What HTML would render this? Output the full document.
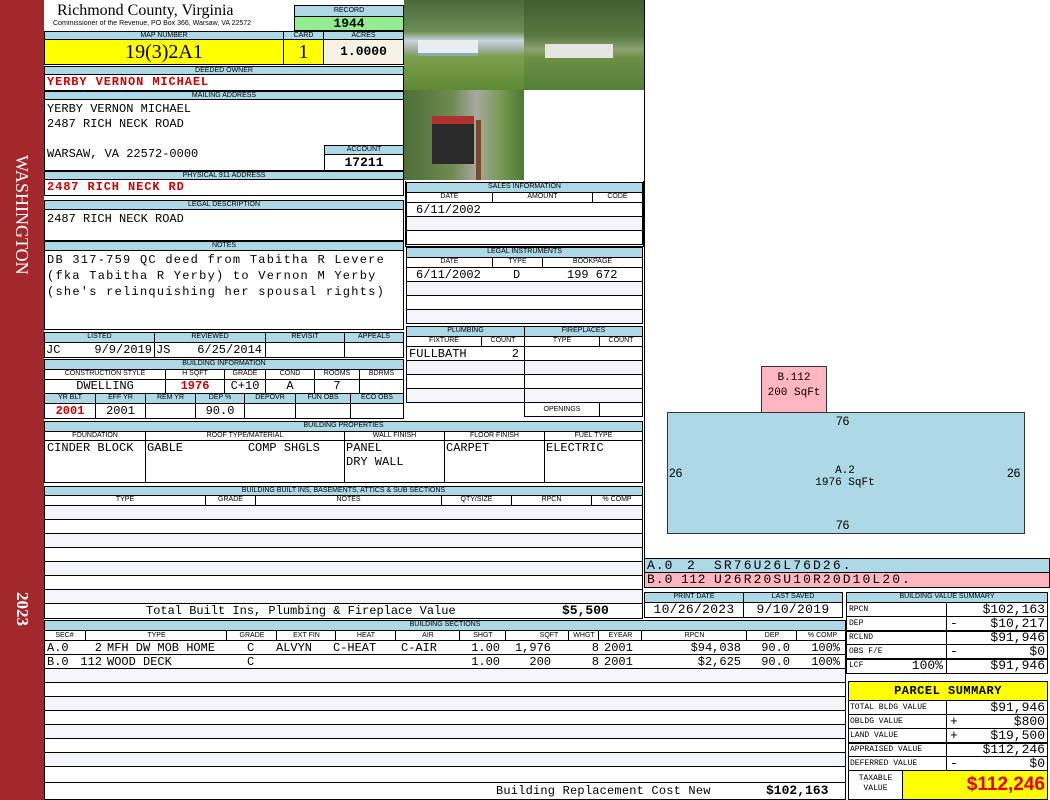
<!DOCTYPE html><html><head><meta charset="utf-8"><style>
body{margin:0;width:1050px;height:800px;position:relative;background:#fff;overflow:hidden;font-family:"Liberation Sans",sans-serif}
.a{position:absolute;box-sizing:border-box;overflow:hidden;white-space:nowrap}
.h{position:absolute;box-sizing:border-box;background:#add8e6;border:1px solid #000;font-size:7px;text-align:center;line-height:8px;overflow:hidden;white-space:nowrap}
.c{position:absolute;box-sizing:border-box;border:1px solid #000;background:#fff;overflow:hidden;white-space:pre}
.m{font-family:"Liberation Mono",monospace;font-size:12px}
.alt{background:#f3f5fb}
.rd{color:#d00000;font-weight:bold}
.s{position:absolute;top:0;white-space:pre}
.hs{position:absolute;top:0;height:9px;text-align:center;border-left:1px solid #000}
</style></head><body>
<!-- sidebar -->
<div class="a" style="left:0;top:0;width:44px;height:800px;background:#a3282b"></div>
<div class="a" style="left:8px;top:155px;width:28px;height:170px;color:#fff;font:18px 'Liberation Serif',serif;writing-mode:vertical-rl;line-height:28px">WASHINGTON</div>
<div class="a" style="left:8px;top:592px;width:28px;height:40px;color:#fff;font:bold 17px 'Liberation Serif',serif;writing-mode:vertical-rl;line-height:28px">2023</div>

<!-- header -->
<div class="a" style="left:57px;top:2px;font:16px 'Liberation Serif',serif">Richmond County, Virginia</div>
<div class="a" style="left:53px;top:20px;font:7px 'Liberation Sans'">Commissioner of the Revenue, PO Box 366, Warsaw, VA 22572</div>
<div class="h" style="left:294px;top:5px;width:110px;height:12px;line-height:10px">RECORD</div>
<div class="c m" style="left:294px;top:16px;width:110px;height:15px;background:#90ee90;text-align:center;font-weight:bold;font-size:13px;line-height:13px">1944</div>
<div class="h" style="left:44px;top:31px;width:240px;height:9px">MAP NUMBER</div>
<div class="h" style="left:283px;top:31px;width:41px;height:9px">CARD</div>
<div class="h" style="left:323px;top:31px;width:81px;height:9px">ACRES</div>
<div class="c" style="left:44px;top:39px;width:240px;height:26px;background:#ffff00;text-align:center;font:20px 'Liberation Serif',serif;line-height:24px">19(3)2A1</div>
<div class="c" style="left:283px;top:39px;width:41px;height:26px;background:#ffff00;text-align:center;font:20px 'Liberation Serif',serif;line-height:24px">1</div>
<div class="c m" style="left:323px;top:39px;width:81px;height:26px;background:#f4f3e4;text-align:center;font-weight:bold;font-size:13px;line-height:24px">1.0000</div>
<div class="h" style="left:44px;top:66px;width:360px;height:9px">DEEDED OWNER</div>
<div class="c m rd" style="left:44px;top:74px;width:360px;height:17px;line-height:15px;padding-left:2px;letter-spacing:0.9px">YERBY VERNON MICHAEL</div>
<div class="h" style="left:44px;top:91px;width:360px;height:9px">MAILING ADDRESS</div>
<div class="c m" style="left:44px;top:99px;width:360px;height:72px;padding:2px 0 0 2px;line-height:15px">YERBY VERNON MICHAEL
2487 RICH NECK ROAD

WARSAW, VA 22572-0000</div>
<div class="h" style="left:324px;top:145px;width:80px;height:10px">ACCOUNT</div>
<div class="c m" style="left:324px;top:154px;width:80px;height:17px;text-align:center;font-weight:bold;font-size:13px;line-height:15px">17211</div>
<div class="h" style="left:44px;top:171px;width:360px;height:9px">PHYSICAL 911 ADDRESS</div>
<div class="c m rd" style="left:44px;top:179px;width:360px;height:17px;line-height:15px;padding-left:2px;letter-spacing:0.9px">2487 RICH NECK RD</div>
<div class="h" style="left:44px;top:200px;width:360px;height:10px">LEGAL DESCRIPTION</div>
<div class="c m" style="left:44px;top:209px;width:360px;height:32px;padding:2px 0 0 2px">2487 RICH NECK ROAD</div>
<div class="h" style="left:44px;top:241px;width:360px;height:10px">NOTES</div>
<div class="c m" style="left:44px;top:250px;width:360px;height:80px;padding:1px 0 0 2px;line-height:16px;letter-spacing:1.25px">DB 317-759 QC deed from Tabitha R Levere
(fka Tabitha R Yerby) to Vernon M Yerby
(she's relinquishing her spousal rights)</div>

<!-- listed -->
<div class="h" style="left:44px;top:332px;width:111px;height:11px">LISTED</div>
<div class="h" style="left:154px;top:332px;width:112px;height:11px">REVIEWED</div>
<div class="h" style="left:265px;top:332px;width:80px;height:11px">REVISIT</div>
<div class="h" style="left:344px;top:332px;width:60px;height:11px">APPEALS</div>
<div class="c m" style="left:44px;top:342px;width:111px;height:16px;line-height:14px"><span class="s" style="left:1px">JC</span><span class="s" style="right:2px">9/9/2019</span></div>
<div class="c m" style="left:154px;top:342px;width:112px;height:16px;line-height:14px"><span class="s" style="left:1px">JS</span><span class="s" style="right:3px">6/25/2014</span></div>
<div class="c" style="left:265px;top:342px;width:80px;height:16px"></div>
<div class="c" style="left:344px;top:342px;width:60px;height:16px"></div>

<!-- building info -->
<div class="h" style="left:44px;top:359px;width:360px;height:11px">BUILDING INFORMATION</div>
<div class="h" style="left:44px;top:369px;width:122px;height:11px;background:#fff">CONSTRUCTION STYLE</div>
<div class="h" style="left:165px;top:369px;width:60px;height:11px;background:#fff">H SQFT</div>
<div class="h" style="left:224px;top:369px;width:42px;height:11px;background:#fff">GRADE</div>
<div class="h" style="left:265px;top:369px;width:50px;height:11px;background:#fff">COND</div>
<div class="h" style="left:314px;top:369px;width:46px;height:11px;background:#fff">ROOMS</div>
<div class="h" style="left:359px;top:369px;width:45px;height:11px;background:#fff">BDRMS</div>
<div class="c m" style="left:44px;top:379px;width:122px;height:15px;text-align:center;line-height:13px">DWELLING</div>
<div class="c m rd" style="left:165px;top:379px;width:60px;height:15px;text-align:center;line-height:13px">1976</div>
<div class="c m" style="left:224px;top:379px;width:42px;height:15px;text-align:center;line-height:13px">C+10</div>
<div class="c m" style="left:265px;top:379px;width:50px;height:15px;text-align:center;line-height:13px">A</div>
<div class="c m" style="left:314px;top:379px;width:46px;height:15px;text-align:center;line-height:13px">7</div>
<div class="c m" style="left:359px;top:379px;width:45px;height:15px"></div>
<div class="h" style="left:44px;top:393px;width:52px;height:11px">YR BLT</div>
<div class="h" style="left:95px;top:393px;width:51px;height:11px">EFF YR</div>
<div class="h" style="left:145px;top:393px;width:51px;height:11px">REM YR</div>
<div class="h" style="left:195px;top:393px;width:50px;height:11px">DEP %</div>
<div class="h" style="left:244px;top:393px;width:52px;height:11px">DEPOVR</div>
<div class="h" style="left:295px;top:393px;width:56px;height:11px">FUN OBS</div>
<div class="h" style="left:350px;top:393px;width:54px;height:11px">ECO OBS</div>
<div class="c m rd" style="left:44px;top:403px;width:52px;height:16px;text-align:center;line-height:14px">2001</div>
<div class="c m" style="left:95px;top:403px;width:51px;height:16px;text-align:center;line-height:14px">2001</div>
<div class="c" style="left:145px;top:403px;width:51px;height:16px"></div>
<div class="c m" style="left:195px;top:403px;width:50px;height:16px;text-align:center;line-height:14px">90.0</div>
<div class="c" style="left:244px;top:403px;width:52px;height:16px"></div>
<div class="c" style="left:295px;top:403px;width:56px;height:16px"></div>
<div class="c" style="left:350px;top:403px;width:54px;height:16px"></div>

<!-- photos -->
<div class="a" style="left:404px;top:0;width:120px;height:90px;background:linear-gradient(#4a6a3a 0,#6d8f55 35%,#c8d6e0 45%,#9fb0a0 55%,#7ea050 62%,#5f8a35 100%)"></div>
<div class="a" style="left:418px;top:40px;width:60px;height:16px;background:#e8eef0;border-bottom:3px solid #8aa"></div>
<div class="a" style="left:524px;top:0;width:120px;height:90px;background:linear-gradient(#3e5e30 0,#587a40 40%,#8ea070 55%,#6a9040 65%,#55803a 100%)"></div>
<div class="a" style="left:545px;top:44px;width:68px;height:14px;background:#e5e5e2"></div>
<div class="a" style="left:404px;top:90px;width:120px;height:90px;background:linear-gradient(90deg,#4e6e38 0,#6d8a50 40%,#a8a8a0 60%,#7a9a55 80%,#4a7a30 100%)"></div>
<div class="a" style="left:432px;top:116px;width:42px;height:48px;background:#2a2a2a;border-top:8px solid #b03030"></div>
<div class="a" style="left:476px;top:120px;width:5px;height:60px;background:#7a4a2a"></div>

<!-- sales -->
<div class="c" style="left:405px;top:181px;width:239px;height:66px;border-width:0 1px 1px 1px"></div>
<div class="h" style="left:406px;top:182px;width:237px;height:11px">SALES INFORMATION</div>
<div class="h" style="left:406px;top:192px;width:87px;height:11px;background:#fff">DATE</div>
<div class="h" style="left:492px;top:192px;width:101px;height:11px;background:#fff">AMOUNT</div>
<div class="h" style="left:592px;top:192px;width:51px;height:11px;background:#fff">CODE</div>
<div class="c m" style="left:406px;top:202px;width:237px;height:15px;line-height:14px;padding-left:9px">6/11/2002</div>
<div class="c alt" style="left:406px;top:216px;width:237px;height:15px"></div>
<div class="c" style="left:406px;top:230px;width:237px;height:15px"></div>

<div class="h" style="left:406px;top:247px;width:237px;height:11px">LEGAL INSTRUMENTS</div>
<div class="h" style="left:406px;top:257px;width:87px;height:11px;background:#fff">DATE</div>
<div class="h" style="left:492px;top:257px;width:51px;height:11px;background:#fff">TYPE</div>
<div class="h" style="left:542px;top:257px;width:101px;height:11px;background:#fff">BOOKPAGE</div>
<div class="c m" style="left:406px;top:267px;width:237px;height:15px;line-height:14px"><span class="s" style="left:9px">6/11/2002</span><span class="s" style="left:106px">D</span><span class="s" style="left:160px">199 672</span></div>
<div class="c alt" style="left:406px;top:281px;width:237px;height:15px"></div>
<div class="c" style="left:406px;top:295px;width:237px;height:15px"></div>
<div class="c alt" style="left:406px;top:309px;width:237px;height:15px"></div>

<div class="h" style="left:406px;top:326px;width:119px;height:11px">PLUMBING</div>
<div class="h" style="left:524px;top:326px;width:119px;height:11px">FIREPLACES</div>
<div class="h" style="left:406px;top:336px;width:76px;height:11px;background:#fff">FIXTURE</div>
<div class="h" style="left:481px;top:336px;width:44px;height:11px;background:#fff">COUNT</div>
<div class="h" style="left:524px;top:336px;width:76px;height:11px;background:#fff">TYPE</div>
<div class="h" style="left:599px;top:336px;width:44px;height:11px;background:#fff">COUNT</div>
<div class="c m" style="left:406px;top:346px;width:119px;height:15px;line-height:14px"><span class="s" style="left:2px">FULLBATH</span><span class="s" style="right:5px">2</span></div>
<div class="c alt" style="left:406px;top:360px;width:119px;height:15px"></div>
<div class="c" style="left:406px;top:374px;width:119px;height:15px"></div>
<div class="c alt" style="left:406px;top:388px;width:119px;height:15px"></div>
<div class="c" style="left:524px;top:346px;width:119px;height:15px"></div>
<div class="c alt" style="left:524px;top:360px;width:119px;height:15px"></div>
<div class="c" style="left:524px;top:374px;width:119px;height:15px"></div>
<div class="c alt" style="left:524px;top:388px;width:119px;height:15px"></div>
<div class="c" style="left:524px;top:402px;width:76px;height:15px;font-size:7px;text-align:center;line-height:13px">OPENINGS</div>
<div class="c" style="left:599px;top:402px;width:44px;height:15px"></div>

<!-- building properties -->
<div class="h" style="left:44px;top:421px;width:599px;height:11px">BUILDING PROPERTIES</div>
<div class="h" style="left:44px;top:431px;width:102px;height:10px;background:#fff">FOUNDATION</div>
<div class="h" style="left:145px;top:431px;width:200px;height:10px;background:#fff">ROOF TYPE/MATERIAL</div>
<div class="h" style="left:344px;top:431px;width:101px;height:10px;background:#fff">WALL FINISH</div>
<div class="h" style="left:444px;top:431px;width:101px;height:10px;background:#fff">FLOOR FINISH</div>
<div class="h" style="left:544px;top:431px;width:99px;height:10px;background:#fff">FUEL TYPE</div>
<div class="c m" style="left:44px;top:440px;width:102px;height:43px;padding-left:2px;line-height:14px">CINDER BLOCK</div>
<div class="c m" style="left:145px;top:440px;width:200px;height:43px;padding-left:1px;line-height:14px">GABLE         COMP SHGLS</div>
<div class="c m" style="left:344px;top:440px;width:101px;height:43px;padding-left:1px;line-height:14px">PANEL
DRY WALL</div>
<div class="c m" style="left:444px;top:440px;width:101px;height:43px;padding-left:1px;line-height:14px">CARPET</div>
<div class="c m" style="left:544px;top:440px;width:99px;height:43px;padding-left:1px;line-height:14px">ELECTRIC</div>

<!-- built ins -->
<div class="h" style="left:44px;top:486px;width:599px;height:10px">BUILDING BUILT INS, BASEMENTS, ATTICS &amp; SUB SECTIONS</div>
<div class="h" style="left:44px;top:495px;width:162px;height:11px;background:#fff">TYPE</div>
<div class="h" style="left:205px;top:495px;width:51px;height:11px;background:#fff">GRADE</div>
<div class="h" style="left:255px;top:495px;width:187px;height:11px;background:#fff">NOTES</div>
<div class="h" style="left:441px;top:495px;width:71px;height:11px;background:#fff">QTY/SIZE</div>
<div class="h" style="left:511px;top:495px;width:81px;height:11px;background:#fff">RPCN</div>
<div class="h" style="left:591px;top:495px;width:52px;height:11px;background:#fff">% COMP</div>
<div class="c alt" style="left:44px;top:505px;width:599px;height:15px"></div>
<div class="c" style="left:44px;top:519px;width:599px;height:15px"></div>
<div class="c alt" style="left:44px;top:533px;width:599px;height:15px"></div>
<div class="c" style="left:44px;top:547px;width:599px;height:15px"></div>
<div class="c alt" style="left:44px;top:561px;width:599px;height:15px"></div>
<div class="c" style="left:44px;top:575px;width:599px;height:15px"></div>
<div class="c alt" style="left:44px;top:589px;width:599px;height:15px"></div>
<div class="c m" style="left:44px;top:603px;width:599px;height:16px;line-height:14px;padding-left:101px">Total Built Ins, Plumbing &amp; Fireplace Value</div>
<div class="a m" style="left:562px;top:604px;font-weight:bold;line-height:14px;font-size:13px">$5,500</div>

<!-- building sections -->
<div class="h" style="left:44px;top:620px;width:802px;height:11px">BUILDING SECTIONS</div>
<div class="a" style="left:44px;top:630px;width:802px;height:11px;border:1px solid #000;background:#fff;font-size:7px;line-height:9px">
<span class="hs" style="left:-1px;width:41px;border:0">SEC#</span>
<span class="hs" style="left:40px;width:141px">TYPE</span>
<span class="hs" style="left:181px;width:50px">GRADE</span>
<span class="hs" style="left:231px;width:59px">EXT FIN</span>
<span class="hs" style="left:290px;width:60px">HEAT</span>
<span class="hs" style="left:350px;width:64px">AIR</span>
<span class="hs" style="left:414px;width:46px">SHGT</span>
<span class="hs" style="left:460px;width:86px">SQFT</span>
<span class="hs" style="left:523px;width:30px">WHGT</span>
<span class="hs" style="left:553px;width:43px">EYEAR</span>
<span class="hs" style="left:596px;width:105px">RPCN</span>
<span class="hs" style="left:701px;width:50px">DEP</span>
<span class="hs" style="left:751px;width:51px">% COMP</span>
</div>
<div class="c m" style="left:44px;top:640px;width:802px;height:15px;line-height:14px">
<span class="s" style="left:2px">A.0</span><span class="s" style="right:743px">2</span><span class="s" style="left:62px">MFH DW MOB HOME</span><span class="s" style="left:202px">C</span><span class="s" style="left:231px">ALVYN</span><span class="s" style="left:288px">C-HEAT</span><span class="s" style="left:356px">C-AIR</span><span class="s" style="right:345px">1.00</span><span class="s" style="right:294px">1,976</span><span class="s" style="right:246px">8</span><span class="s" style="left:559px">2001</span><span class="s" style="right:104px">$94,038</span><span class="s" style="right:55px">90.0</span><span class="s" style="right:5px">100%</span></div>
<div class="c m" style="left:44px;top:654px;width:802px;height:15px;line-height:14px">
<span class="s" style="left:2px">B.0</span><span class="s" style="right:743px">112</span><span class="s" style="left:62px">WOOD DECK</span><span class="s" style="left:202px">C</span><span class="s" style="right:345px">1.00</span><span class="s" style="right:294px">200</span><span class="s" style="right:246px">8</span><span class="s" style="left:559px">2001</span><span class="s" style="right:104px">$2,625</span><span class="s" style="right:55px">90.0</span><span class="s" style="right:5px">100%</span></div>
<div class="c alt" style="left:44px;top:668px;width:802px;height:15px"></div>
<div class="c" style="left:44px;top:682px;width:802px;height:15px"></div>
<div class="c alt" style="left:44px;top:696px;width:802px;height:15px"></div>
<div class="c" style="left:44px;top:710px;width:802px;height:15px"></div>
<div class="c alt" style="left:44px;top:724px;width:802px;height:15px"></div>
<div class="c" style="left:44px;top:738px;width:802px;height:15px"></div>
<div class="c alt" style="left:44px;top:752px;width:802px;height:15px"></div>
<div class="c" style="left:44px;top:766px;width:802px;height:17px"></div>
<div class="c m" style="left:44px;top:782px;width:802px;height:18px;line-height:16px;padding-left:451px;letter-spacing:0.2px">Building Replacement Cost New</div>
<div class="a m" style="left:766px;top:783px;font-weight:bold;line-height:16px;font-size:13px">$102,163</div>

<!-- sketch -->
<div class="a" style="left:644px;top:0;width:406px;height:558px;border-left:1px solid #000"></div>
<div class="a" style="left:761px;top:366px;width:66px;height:48px;background:#ffb6c1;border:1px solid #333;font:11px 'Liberation Mono',monospace;text-align:center;line-height:15px;padding-top:4px">B.112<br>200 SqFt</div>
<div class="a" style="left:667px;top:412px;width:358px;height:122px;background:#add8e6;border:1px solid #333"></div>
<div class="a" style="left:836px;top:414px;font:12px 'Liberation Sans'">76</div>
<div class="a" style="left:836px;top:518px;font:12px 'Liberation Sans'">76</div>
<div class="a" style="left:669px;top:466px;font:12px 'Liberation Sans'">26</div>
<div class="a" style="left:1007px;top:466px;font:12px 'Liberation Sans'">26</div>
<div class="a" style="left:790px;top:465px;width:110px;text-align:center;line-height:15px;font:11px 'Liberation Mono',monospace">A.2<br>1976 SqFt</div>

<div class="c m" style="left:644px;top:558px;width:406px;height:15px;background:#add8e6;line-height:13px;font-size:13px"><span class="s" style="left:2px;letter-spacing:1px">A.0</span><span class="s" style="left:42px">2</span><span class="s" style="left:69px;letter-spacing:2.1px">SR76U26L76D26.</span></div>
<div class="c m" style="left:644px;top:572px;width:406px;height:16px;background:#ffb6c1;line-height:14px;font-size:13px"><span class="s" style="left:2px;letter-spacing:1px">B.0</span><span class="s" style="left:36px;letter-spacing:0.5px">112</span><span class="s" style="left:69px;letter-spacing:2.1px">U26R20SU10R20D10L20.</span></div>

<div class="h" style="left:644px;top:592px;width:100px;height:11px">PRINT DATE</div>
<div class="h" style="left:743px;top:592px;width:100px;height:11px">LAST SAVED</div>
<div class="c m" style="left:644px;top:602px;width:100px;height:16px;text-align:center;line-height:14px;font-size:13px;letter-spacing:0.3px">10/26/2023</div>
<div class="c m" style="left:743px;top:602px;width:100px;height:16px;text-align:center;line-height:14px;font-size:13px;letter-spacing:0.3px">9/10/2019</div>

<!-- value summary -->
<div class="h" style="left:846px;top:592px;width:202px;height:11px">BUILDING VALUE SUMMARY</div>
<div class="c" style="left:846px;top:602px;width:101px;height:15px;font:8px 'Liberation Mono';line-height:13px;padding-left:2px">RPCN</div>
<div class="c m" style="left:946px;top:602px;width:102px;height:15px;text-align:right;line-height:13px;padding-right:2px;font-size:13px">$102,163</div>
<div class="c" style="left:846px;top:616px;width:101px;height:15px;font:8px 'Liberation Mono';line-height:13px;padding-left:2px">DEP</div>
<div class="c m" style="left:946px;top:616px;width:102px;height:15px;line-height:13px;font-size:13px"><span class="s" style="left:3px">-</span><span class="s" style="right:2px">$10,217</span></div>
<div class="c" style="left:846px;top:630px;width:101px;height:15px;font:8px 'Liberation Mono';line-height:12px;padding-left:2px;border-top-width:2px">RCLND</div>
<div class="c m" style="left:946px;top:630px;width:102px;height:15px;text-align:right;line-height:12px;padding-right:2px;border-top-width:2px;font-size:13px">$91,946</div>
<div class="c" style="left:846px;top:644px;width:101px;height:15px;font:8px 'Liberation Mono';line-height:13px;padding-left:2px">OBS F/E</div>
<div class="c m" style="left:946px;top:644px;width:102px;height:15px;line-height:13px;font-size:13px"><span class="s" style="left:3px">-</span><span class="s" style="right:2px">$0</span></div>
<div class="c" style="left:846px;top:658px;width:101px;height:16px;font:8px 'Liberation Mono';line-height:12px;padding-left:2px;border-top-width:2px">LCF<span class="s" style="right:3px;font-size:13px">100%</span></div>
<div class="c m" style="left:946px;top:658px;width:102px;height:16px;text-align:right;line-height:12px;padding-right:2px;border-top-width:2px;font-size:13px">$91,946</div>

<div class="c" style="left:848px;top:681px;width:200px;height:20px;background:#ffff00;text-align:center;font:bold 12px 'Liberation Mono';line-height:18px;letter-spacing:0.5px">PARCEL SUMMARY</div>
<div class="c" style="left:848px;top:700px;width:99px;height:15px;font:8px 'Liberation Mono';line-height:13px;padding-left:1px">TOTAL BLDG VALUE</div>
<div class="c m" style="left:946px;top:700px;width:102px;height:15px;text-align:right;line-height:13px;padding-right:2px;font-size:13px">$91,946</div>
<div class="c" style="left:848px;top:714px;width:99px;height:15px;font:8px 'Liberation Mono';line-height:13px;padding-left:1px">OBLDG VALUE</div>
<div class="c m" style="left:946px;top:714px;width:102px;height:15px;line-height:13px;font-size:13px"><span class="s" style="left:3px">+</span><span class="s" style="right:2px">$800</span></div>
<div class="c" style="left:848px;top:728px;width:99px;height:15px;font:8px 'Liberation Mono';line-height:13px;padding-left:1px">LAND VALUE</div>
<div class="c m" style="left:946px;top:728px;width:102px;height:15px;line-height:13px;font-size:13px"><span class="s" style="left:3px">+</span><span class="s" style="right:2px">$19,500</span></div>
<div class="c" style="left:848px;top:742px;width:99px;height:15px;font:8px 'Liberation Mono';line-height:12px;padding-left:1px;border-top-width:2px">APPRAISED VALUE</div>
<div class="c m" style="left:946px;top:742px;width:102px;height:15px;text-align:right;line-height:12px;padding-right:2px;border-top-width:2px;font-size:13px">$112,246</div>
<div class="c" style="left:848px;top:756px;width:99px;height:15px;font:8px 'Liberation Mono';line-height:13px;padding-left:1px">DEFERRED VALUE</div>
<div class="c m" style="left:946px;top:756px;width:102px;height:15px;line-height:13px;font-size:13px"><span class="s" style="left:3px">-</span><span class="s" style="right:2px">$0</span></div>
<div class="c" style="left:848px;top:770px;width:55px;height:30px;font:8px 'Liberation Mono';line-height:10px;text-align:center;padding-top:3px">TAXABLE
VALUE</div>
<div class="c" style="left:902px;top:770px;width:146px;height:30px;background:#ffff00;color:#e00000;font:bold 19px 'Liberation Sans';text-align:right;line-height:27px;padding-right:2px">$112,246</div>
</body></html>
